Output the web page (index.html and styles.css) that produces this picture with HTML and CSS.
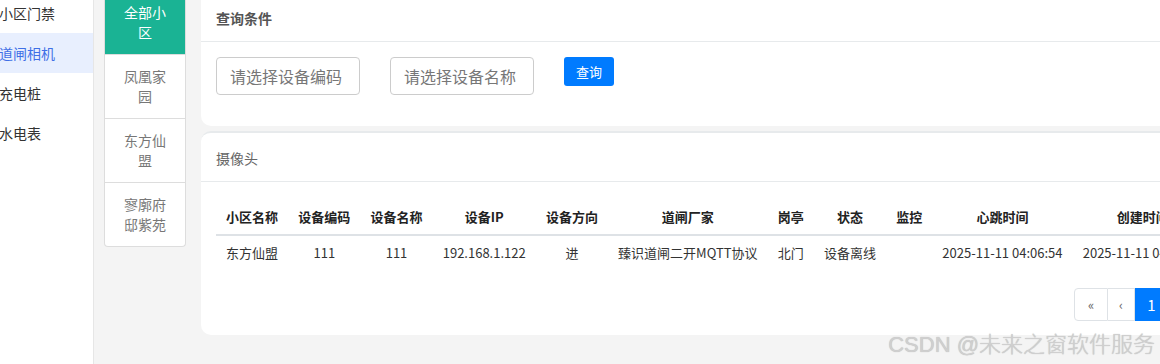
FILE: index.html
```html
<!DOCTYPE html>
<html lang="zh-CN">
  <head>
    <meta charset="UTF-8" />
    <meta name="viewport" content="width=device-width, initial-scale=1.0" />
    <title>道闸相机</title>
    <link rel="stylesheet" href="styles.css">
  </head>
  <body>
    <div class="layout">
      <div class="sidebar">
        <div class="menu-item">小区门禁</div>
        <div class="menu-item active">道闸相机</div>
        <div class="menu-item">充电桩</div>
        <div class="menu-item">水电表</div>
      </div>

      <div class="community-list">
        <div class="community-item active">全部小区</div>
        <div class="community-item">凤凰家园</div>
        <div class="community-item">东方仙盟</div>
        <div class="community-item">寥廓府邸紫苑</div>
      </div>

      <div class="main">
        <div class="ibox">
          <div class="ibox-title"><h5>查询条件</h5></div>
          <div class="ibox-content query-body">
            <input type="text" class="form-input" placeholder="请选择设备编码" />
            <input type="text" class="form-input" placeholder="请选择设备名称" />
            <button type="button" class="btn-query">查询</button>
          </div>
        </div>

        <div class="ibox camera-box">
          <div class="ibox-title"><h5 class="light">摄像头</h5></div>
          <div class="ibox-content table-body">
            <table class="data-table">
              <thead>
                <tr>
                  <th>小区名称</th>
                  <th>设备编码</th>
                  <th>设备名称</th>
                  <th>设备IP</th>
                  <th>设备方向</th>
                  <th>道闸厂家</th>
                  <th>岗亭</th>
                  <th>状态</th>
                  <th>监控</th>
                  <th>心跳时间</th>
                  <th>创建时间</th>
                  <th>操作</th>
                </tr>
              </thead>
              <tbody>
                <tr>
                  <td>东方仙盟</td>
                  <td>111</td>
                  <td>111</td>
                  <td>192.168.1.122</td>
                  <td>进</td>
                  <td>臻识道闸二开MQTT协议</td>
                  <td>北门</td>
                  <td>设备离线</td>
                  <td></td>
                  <td>2025-11-11 04:06:54</td>
                  <td>2025-11-11 04:06:54</td>
                  <td>修改</td>
                </tr>
              </tbody>
            </table>
            <div class="pagination">
              <span class="page-link">&laquo;</span>
              <span class="page-link">&lsaquo;</span>
              <span class="page-link current">1</span>
              <span class="page-link">&rsaquo;</span>
              <span class="page-link">&raquo;</span>
            </div>
          </div>
        </div>
      </div>
    </div>

    <div class="watermark">CSDN @未来之窗软件服务</div>
  </body>
</html>
```

FILE: styles.css
```css
body {
  font-family: "Microsoft YaHei", "Noto Sans CJK SC", sans-serif;
  margin: 0;
  padding: 0;
  color: #333;
  background-color: #f4f4f4;
  height: 364px;
  overflow: hidden;
  position: relative;
}

.layout {
  display: flex;
  align-items: flex-start;
  margin-top: -9px;
  width: 1300px;
  height: 373px;
}

/* 左侧菜单 */
.sidebar {
  width: 94px;
  height: 100%;
  padding-top: 2px;
  background-color: #fff;
  border-right: 1px solid #e6e6e6;
  box-sizing: border-box;
  flex-shrink: 0;
}

.menu-item {
  height: 40px;
  line-height: 40px;
  font-size: 14px;
  color: #333;
  text-indent: -1px;
  white-space: nowrap;
}

.menu-item.active {
  background-color: #e8effe;
  color: #3f6fe6;
}

/* 小区列表 */
.community-list {
  width: 82px;
  margin-left: 10px;
  background-color: #fff;
  border: 1px solid #ddd;
  border-top: none;
  border-radius: 0 0 4px 4px;
  box-sizing: border-box;
  flex-shrink: 0;
}

.community-item {
  padding: 12px 13px;
  line-height: 19.5px;
  font-size: 14px;
  color: #777;
  text-align: center;
  border-top: 1px solid #ddd;
}

.community-item:first-child {
  border-top: none;
}

.community-item.active {
  background-color: #1ab394;
  color: #fff;
}

/* 主体 */
.main {
  width: 1044px;
  margin-left: 15px;
  display: flex;
  flex-direction: column;
  gap: 5px;
  flex-shrink: 0;
}

.ibox {
  background-color: #fff;
  border-radius: 10px;
  border-top: 2px solid #e7eaec;
  overflow: hidden;
}

.ibox-title {
  min-height: 49px;
  padding: 15px 15px 8px;
  box-sizing: border-box;
  border-bottom: 1px solid #e7eaec;
}

.ibox-title h5 {
  margin: 0;
  font-size: 14px;
  line-height: 20px;
  font-weight: bold;
  color: #555;
}

.ibox-title h5.light {
  font-weight: normal;
  color: #666;
}

.query-body {
  display: flex;
  align-items: flex-start;
  gap: 30px;
  padding: 15px 15px 31px;
}

.form-input {
  width: 144px;
  height: 38px;
  padding: 0 13px;
  border: 1px solid #ccc;
  border-radius: 4px;
  font-family: inherit;
  font-size: 16px;
  box-sizing: border-box;
}

.form-input::placeholder {
  color: #777;
}

.btn-query {
  height: 29px;
  padding: 0 12px;
  background-color: #007bff;
  color: #fff;
  border: none;
  border-radius: 3px;
  font-family: inherit;
  font-size: 13px;
  cursor: pointer;
}

/* 表格 */
.table-body {
  padding: 18px 15px 14px;
}

.data-table {
  border-collapse: collapse;
  font-size: 13px;
  white-space: nowrap;
}

.data-table th,
.data-table td {
  padding: 8px 10.1px;
  line-height: 18px;
  text-align: center;
}

.data-table th {
  font-weight: bold;
  color: #222;
  border-bottom: 2px solid #dee2e6;
}

.data-table td {
  color: #333;
}

.pagination {
  display: flex;
  justify-content: flex-end;
  margin-top: 18px;
}

.page-link {
  min-width: 27px;
  height: 33px;
  line-height: 31px;
  padding: 0 3px;
  text-align: center;
  font-size: 13px;
  color: #666;
  border: 1px solid #dee2e6;
  border-left: none;
  box-sizing: border-box;
}

.page-link:first-child {
  min-width: 34px;
  border-left: 1px solid #dee2e6;
  border-radius: 4px 0 0 4px;
}

.page-link:last-child {
  min-width: 34px;
  border-radius: 0 4px 4px 0;
}

.page-link.current {
  min-width: 34px;
  background-color: #007bff;
  border-color: #007bff;
  color: #fff;
  font-size: 15px;
}

.watermark {
  position: absolute;
  right: 5px;
  bottom: 6px;
  font-family: "Liberation Sans", "Noto Sans CJK SC", sans-serif;
  font-size: 22px;
  font-weight: 300;
  color: #cfcfcf;
  text-shadow: 0 0 1px rgba(0, 0, 0, 0.25);
}
```
